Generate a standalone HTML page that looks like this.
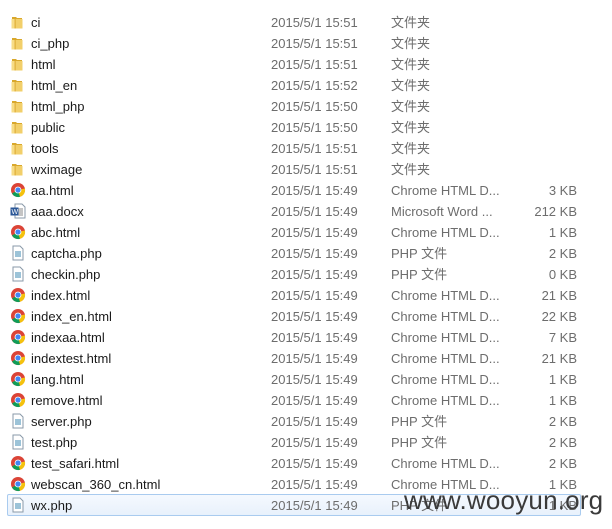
<!DOCTYPE html>
<html><head><meta charset="utf-8"><style>
body{margin:0;width:612px;height:529px;background:#fff;position:relative;overflow:hidden;font-family:"Liberation Sans","Noto Sans CJK SC",sans-serif;font-size:13px}
.r{position:absolute;left:0;width:612px;height:21px;line-height:21px}
.n{position:absolute;left:31px;color:#1a1a1a}
.d{position:absolute;left:271px;color:#6d6d6d}
.t{position:absolute;left:391px;color:#6d6d6d}
.s{position:absolute;right:35px;color:#6d6d6d}
svg.i{position:absolute;left:10px;top:2px}
.sel{position:absolute;left:7px;top:494px;width:572px;height:20px;border:1px solid #a9cbef;border-radius:2px;background:linear-gradient(#f5f9fe,#e8f1fc)}
.wm{position:absolute;left:404px;top:485px;font-size:26px;color:#3a3a3a;font-family:"Liberation Sans",sans-serif;letter-spacing:0.2px}
</style></head><body>
<svg width="0" height="0" style="position:absolute"><defs>
<symbol id="f" viewBox="0 0 16 16"><path d="M2 3h4l1 1h5v10H2z" fill="#d9a82c"/><path d="M1.5 5h11v9.5H1.5z" fill="#f2cf6a"/><path d="M5 5v9.5" stroke="#e0b13c" stroke-width="1.5"/><rect x="1.5" y="5" width="3" height="9.5" fill="#f7dc86"/></symbol>
<symbol id="c" viewBox="0 0 16 16"><circle cx="8" cy="8" r="7" fill="#db4437"/><path d="M8 8L2 11.5A7 7 0 0 0 10 14.8z" fill="#0f9d58"/><path d="M8 8l6.9-1.5A7 7 0 0 1 10 14.8z" fill="#f4c20d"/><circle cx="8" cy="8" r="3.4" fill="#fff"/><circle cx="8" cy="8" r="2.6" fill="#4285f4"/></symbol>
<symbol id="p" viewBox="0 0 16 16"><path d="M3 1h7l3 3v11H3z" fill="#fff" stroke="#8a9aa8"/><rect x="5" y="6" width="6" height="6" fill="#9cc3d8"/></symbol>
<symbol id="w" viewBox="0 0 16 16"><path d="M5 1h7l3 3v11H5z" fill="#fff" stroke="#8a9aa8"/><path d="M8 6h5M8 8h5M8 10h5M8 12h5" stroke="#888"/><rect x="0.5" y="4.5" width="8" height="8" fill="#2b5797"/><text x="1.5" y="11" font-size="7" fill="#fff" font-family="Liberation Sans">W</text></symbol>
</defs></svg>
<div class="sel"></div>
<div id="rows"></div>
<script>
var R=[["f","ci","2015/5/1 15:51","文件夹",""],["f","ci_php","2015/5/1 15:51","文件夹",""],["f","html","2015/5/1 15:51","文件夹",""],["f","html_en","2015/5/1 15:52","文件夹",""],["f","html_php","2015/5/1 15:50","文件夹",""],["f","public","2015/5/1 15:50","文件夹",""],["f","tools","2015/5/1 15:51","文件夹",""],["f","wximage","2015/5/1 15:51","文件夹",""],
["c","aa.html","2015/5/1 15:49","Chrome HTML D...","3 KB"],["w","aaa.docx","2015/5/1 15:49","Microsoft Word ...","212 KB"],["c","abc.html","2015/5/1 15:49","Chrome HTML D...","1 KB"],["p","captcha.php","2015/5/1 15:49","PHP 文件","2 KB"],["p","checkin.php","2015/5/1 15:49","PHP 文件","0 KB"],["c","index.html","2015/5/1 15:49","Chrome HTML D...","21 KB"],["c","index_en.html","2015/5/1 15:49","Chrome HTML D...","22 KB"],["c","indexaa.html","2015/5/1 15:49","Chrome HTML D...","7 KB"],["c","indextest.html","2015/5/1 15:49","Chrome HTML D...","21 KB"],["c","lang.html","2015/5/1 15:49","Chrome HTML D...","1 KB"],["c","remove.html","2015/5/1 15:49","Chrome HTML D...","1 KB"],["p","server.php","2015/5/1 15:49","PHP 文件","2 KB"],["p","test.php","2015/5/1 15:49","PHP 文件","2 KB"],["c","test_safari.html","2015/5/1 15:49","Chrome HTML D...","2 KB"],["c","webscan_360_cn.html","2015/5/1 15:49","Chrome HTML D...","1 KB"],["p","wx.php","2015/5/1 15:49","PHP 文件","1 KB"]];
var h="";R.forEach(function(r,i){h+='<div class="r" style="top:'+(12+21*i)+'px"><svg class="i" width="16" height="16"><use href="#'+r[0]+'"/></svg><span class="n">'+r[1]+'</span><span class="d">'+r[2]+'</span><span class="t">'+r[3]+'</span><span class="s">'+r[4]+'</span></div>'});
document.getElementById("rows").innerHTML=h;
</script>
<div class="wm">www.wooyun.org</div>
</body></html>
